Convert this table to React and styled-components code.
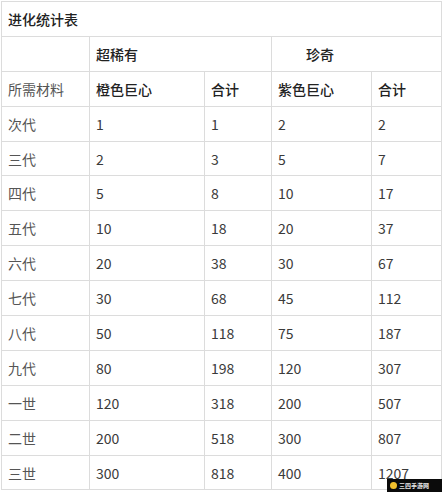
import React from 'react';
import styled, { createGlobalStyle } from 'styled-components';

const GlobalStyle = createGlobalStyle`
    html, body {
        margin: 0;
        padding: 0;
        background: #ffffff;
    }
    body {
        font-family: "Noto Sans CJK SC", "Noto Sans", sans-serif;
        color: #333333;
    }
`;

const Page = styled.div`
    position: relative;
    width: 442px;
    height: 492px;
    padding: 1px 0 0 1px;
    box-sizing: border-box;
    overflow: hidden;
`;

const Table = styled.table`
    width: 440px;
    border-collapse: collapse;
    table-layout: fixed;
    font-size: 14px;
`;

const Row = styled.tr`
    height: 34.9px;
`;

const Cell = styled.td`
    border: 1px solid #dcdcdc;
    padding: 0 0 0 ${p => p.$indent || 6}px;
    text-align: left;
    vertical-align: middle;
    line-height: 18px;
    font-weight: ${p => (p.$bold ? 500 : 400)};
    color: ${p => (p.$bold ? '#222222' : p.$muted ? '#555555' : '#3a3a3a')};
    white-space: nowrap;
`;

const Badge = styled.div`
    position: absolute;
    right: 0;
    bottom: 0;
    width: 55px;
    height: 13px;
    background: #0b0b0b;
    display: flex;
    align-items: center;
    gap: 2px;
    padding-left: 3px;
    box-sizing: border-box;
`;

const BadgeDot = styled.span`
    width: 7px;
    height: 7px;
    border-radius: 50%;
    background: #f2c12e;
`;

const BadgeText = styled.span`
    font-size: 6px;
    line-height: 7px;
    color: #e8e8e8;
    font-weight: 700;
`;

const rows = [
    ['次代', 1, 1, 2, 2],
    ['三代', 2, 3, 5, 7],
    ['四代', 5, 8, 10, 17],
    ['五代', 10, 18, 20, 37],
    ['六代', 20, 38, 30, 67],
    ['七代', 30, 68, 45, 112],
    ['八代', 50, 118, 75, 187],
    ['九代', 80, 198, 120, 307],
    ['一世', 120, 318, 200, 507],
    ['二世', 200, 518, 300, 807],
    ['三世', 300, 818, 400, 1207],
];

const App = () => {
    return (
        <Page>
            <GlobalStyle />
            <Table>
                <colgroup>
                    <col style={{ width: 88 }} />
                    <col style={{ width: 115 }} />
                    <col style={{ width: 67 }} />
                    <col style={{ width: 100 }} />
                    <col style={{ width: 70 }} />
                </colgroup>
                <tbody>
                    <Row>
                        <Cell colSpan={5} $bold>进化统计表</Cell>
                    </Row>
                    <Row>
                        <Cell />
                        <Cell colSpan={2} $bold>超稀有</Cell>
                        <Cell colSpan={2} $bold $indent={34}>珍奇</Cell>
                    </Row>
                    <Row>
                        <Cell $muted>所需材料</Cell>
                        <Cell $bold>橙色巨心</Cell>
                        <Cell $bold>合计</Cell>
                        <Cell $bold>紫色巨心</Cell>
                        <Cell $bold>合计</Cell>
                    </Row>
                    {rows.map(r => (
                        <Row key={r[0]}>
                            {r.map((v, i) => (
                                <Cell key={i} $muted={i === 0}>{v}</Cell>
                            ))}
                        </Row>
                    ))}
                </tbody>
            </Table>
            <Badge>
                <BadgeDot />
                <BadgeText>三四手游网</BadgeText>
            </Badge>
        </Page>
    );
};

export default App;
